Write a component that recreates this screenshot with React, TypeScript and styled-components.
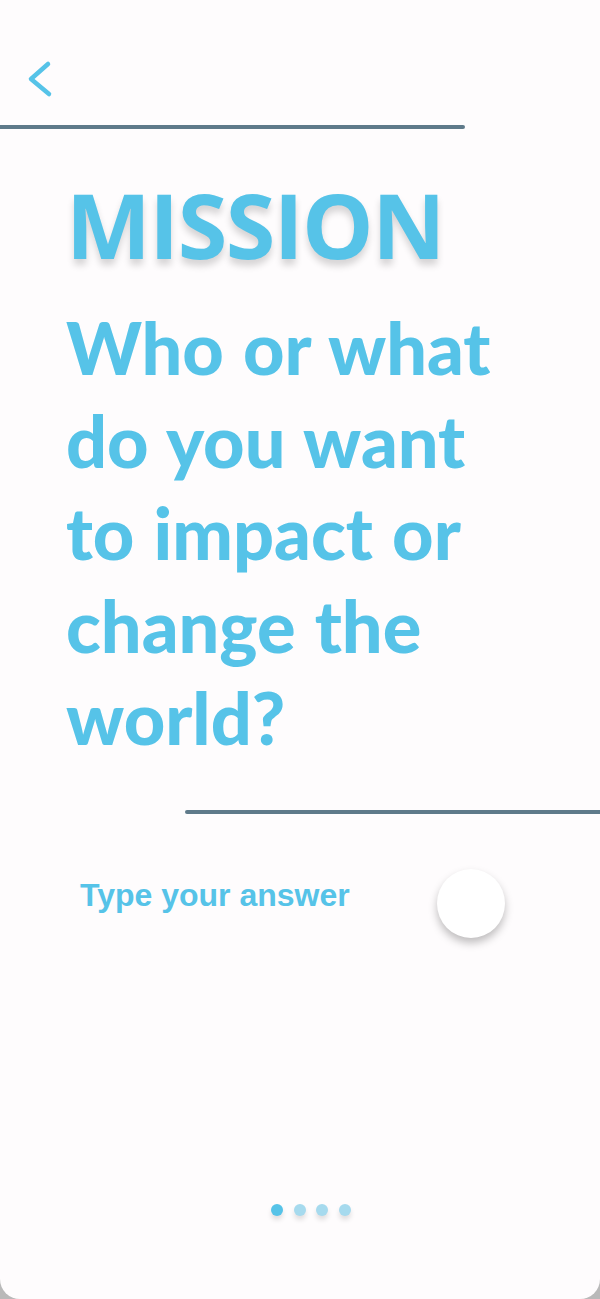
import React from "react";
import styled, { createGlobalStyle } from "styled-components";

const GlobalStyle = createGlobalStyle`
  html, body { margin: 0; padding: 0; background: #b9b9b9; }
  * { box-sizing: border-box; }
`;

const Screen = styled.div`
  width: 600px;
  min-height: 1299px;
  background: #fefcfd;
  border-radius: 0 0 20px 20px;
  display: flex;
  flex-direction: column;
  overflow: hidden;
`;

const Header = styled.header`
  height: 125px;
  display: flex;
  align-items: flex-start;
  padding: 60px 0 0 27px;
`;

const BackButton = styled.button`
  border: none;
  background: none;
  padding: 0;
  width: 28px;
  height: 38px;
  cursor: pointer;
  display: flex;
`;

const Rule = styled.div<{ $width: number; $offset: number }>`
  height: 4px;
  width: ${(p) => p.$width}px;
  margin-left: ${(p) => p.$offset}px;
  background: #5f7a8a;
  border-radius: ${(p) => (p.$offset === 0 ? "0 2px 2px 0" : "2px 0 0 2px")};
`;

const Content = styled.main`
  padding: 0 0 0 66px;
`;

const Title = styled.h1`
  margin: 50px 0 0;
  font-family: "Open Sans", "Noto Sans", sans-serif;
  font-weight: 700;
  font-size: 90px;
  line-height: 90px;
  color: #56c3e8;
  text-shadow: 0 6px 7px rgba(0, 0, 0, 0.16);
  letter-spacing: -1.5px;
`;

const Question = styled.h2`
  margin: 32px 0 46px;
  font-family: Lato, "Open Sans", sans-serif;
  font-weight: 900;
  font-size: 72px;
  line-height: 92.5px;
  word-spacing: 2px;
  color: #56c3e8;
`;

const Line = styled.span`
  display: block;
  height: 92.5px;
  white-space: nowrap;
`;

const AnswerRow = styled.div`
  display: flex;
  justify-content: space-between;
  align-items: flex-start;
  padding: 55px 95px 0 80px;
`;

const AnswerText = styled.div`
  margin-top: 10px;
  font-family: "Liberation Sans", Arial, sans-serif;
  font-weight: 700;
  font-size: 32px;
  line-height: 32px;
  color: #56c3e8;
`;

const SendButton = styled.button`
  width: 68px;
  height: 69px;
  border-radius: 50%;
  border: none;
  background: #ffffff;
  box-shadow: 0 5px 8px rgba(0, 0, 0, 0.25);
  cursor: pointer;
`;

const Footer = styled.footer`
  margin-top: auto;
  padding: 0 0 83px 22px;
  display: flex;
  justify-content: center;
  gap: 10.5px;
`;

const Dot = styled.span<{ $active?: boolean }>`
  width: 12px;
  height: 12px;
  border-radius: 50%;
  background: ${(p) => (p.$active ? "#56c3e8" : "#a6daee")};
  box-shadow: 0 4px 5px rgba(0, 0, 0, 0.12);
`;

export default function App() {
  return (
    <>
      <GlobalStyle />
      <Screen>
        <Header>
          <BackButton aria-label="Back">
            <svg width="28" height="38" viewBox="27 60 28 38">
              <polyline
                points="48,64 31,79 49,94"
                fill="none"
                stroke="#56c3e8"
                strokeWidth="4.5"
                strokeLinecap="round"
                strokeLinejoin="round"
              />
            </svg>
          </BackButton>
        </Header>
        <Rule $width={465} $offset={0} />
        <Content>
          <Title>MISSION</Title>
          <Question>
            <Line>Who or what</Line>
            <Line>do you want</Line>
            <Line>to impact or</Line>
            <Line>change the</Line>
            <Line>world?</Line>
          </Question>
        </Content>
        <Rule $width={415} $offset={185} />
        <AnswerRow>
          <AnswerText>Type your answer</AnswerText>
          <SendButton aria-label="Submit" />
        </AnswerRow>
        <Footer>
          <Dot $active />
          <Dot />
          <Dot />
          <Dot />
        </Footer>
      </Screen>
    </>
  );
}
